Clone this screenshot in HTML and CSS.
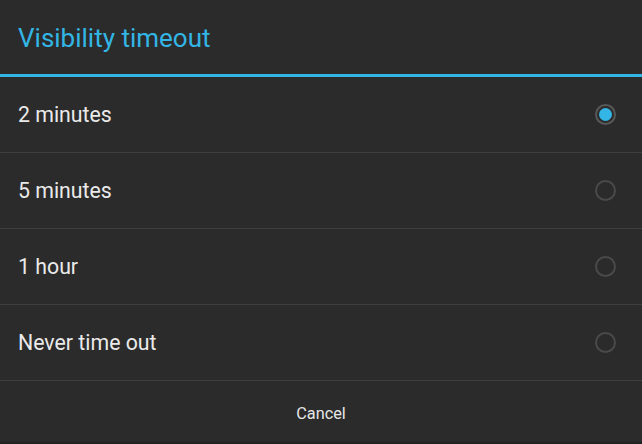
FILE: index.html
```html
<!DOCTYPE html>
<html>
<head>
<meta charset="utf-8">
<link rel="stylesheet" href="styles.css">
</head>
<body>
<div class="dialog">
  <div class="title">Visibility timeout</div>
  <div class="title-line"></div>
  <div class="list">
    <div class="row"><span class="label">2 minutes</span><span class="radio checked"><span class="dot"></span></span></div>
    <div class="row"><span class="label">5 minutes</span><span class="radio"></span></div>
    <div class="row"><span class="label">1 hour</span><span class="radio"></span></div>
    <div class="row"><span class="label">Never time out</span><span class="radio"></span></div>
  </div>
  <div class="buttons"><span class="btn">Cancel</span></div>
</div>
</body>
</html>
```
FILE: styles.css
```css
html, body {
  margin: 0;
  padding: 0;
  background: #2b2b2b;
}
.dialog {
  width: 642px;
  height: 444px;
  display: flex;
  flex-direction: column;
  background: #2b2b2b;
  font-family: Roboto, "Noto Sans", sans-serif;
}
.title {
  height: 74px;
  box-sizing: border-box;
  padding-left: 18px;
  padding-top: 2px;
  display: flex;
  align-items: center;
  color: #33b5e5;
  font-size: 26px;
}
.title-line {
  height: 3px;
  background: #33b5e5;
}
.row {
  height: 75px;
  border-bottom: 1px solid #3f3f3f;
  display: flex;
  align-items: center;
  justify-content: space-between;
  padding: 0 26px 0 18px;
}
.label {
  color: #eaeaea;
  font-size: 21.3px;
}
.radio {
  width: 17px;
  height: 17px;
  border: 2px solid #4a4a4a;
  border-radius: 50%;
  display: flex;
  align-items: center;
  justify-content: center;
}
.radio.checked {
  border-color: #585858;
}
.dot {
  width: 13px;
  height: 13px;
  border-radius: 50%;
  background: #33b5e5;
}
.buttons {
  flex: 1;
  display: flex;
  align-items: center;
  justify-content: center;
  padding-top: 4px;
  border-bottom: 2px solid #222;
}
.btn {
  color: #e6e6e6;
  font-size: 16.3px;
}
```
